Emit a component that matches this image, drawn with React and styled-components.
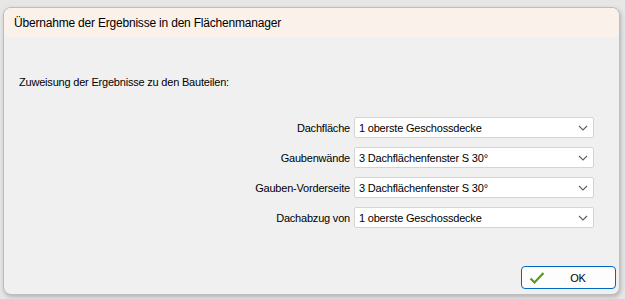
import React from "react";
import styled, { createGlobalStyle } from "styled-components";

const GlobalStyle = createGlobalStyle`
  html, body {
    margin: 0;
    padding: 0;
    background: #e6e6e6;
  }
  body {
    font-family: "Liberation Sans", Arial, sans-serif;
    font-size: 11px;
    letter-spacing: -0.2px;
    color: #000;
  }
`;

const Screen = styled.div`
  width: 625px;
  height: 299px;
  padding: 7px 5px 4px 3px;
  box-sizing: border-box;
  overflow: hidden;
`;

const Window = styled.div`
  height: 288px;
  display: flex;
  flex-direction: column;
  background: #f0f0f0;
  border: 1px solid #bdbdbd;
  border-radius: 8px;
  box-shadow: 1px 2px 4px rgba(0, 0, 0, 0.22);
  overflow: hidden;
  box-sizing: border-box;
`;

const TitleBar = styled.div`
  height: 29px;
  flex: none;
  display: flex;
  align-items: center;
  padding-left: 10px;
  background: #fbf1eb;
  font-size: 12px;
`;

const Body = styled.div`
  flex: 1;
  display: flex;
  flex-direction: column;
  padding: 37px 25px 0 15px;
`;

const Intro = styled.div`
  line-height: 16px;
  margin-bottom: 27px;
`;

const Form = styled.div`
  align-self: flex-end;
  display: grid;
  grid-template-columns: auto 240px;
  column-gap: 4px;
  row-gap: 9px;
  align-items: center;
`;

const Label = styled.div`
  text-align: right;
  white-space: nowrap;
`;

const Select = styled.div`
  height: 21px;
  box-sizing: border-box;
  display: flex;
  align-items: center;
  justify-content: space-between;
  padding: 0 5px 0 4px;
  background: #fff;
  border: 1px solid #d4d4d4;
  border-radius: 2px;
`;

const Footer = styled.div`
  flex: none;
  display: flex;
  justify-content: flex-end;
  padding: 0 3px 5px 0;
`;

const Button = styled.button`
  width: 95px;
  height: 23px;
  display: flex;
  align-items: center;
  padding: 0 0 0 7px;
  background: #fdfdfd;
  border: 1px solid #0067c0;
  border-radius: 4px;
  font: inherit;
  letter-spacing: inherit;
  color: #000;
  cursor: pointer;
`;

const ButtonText = styled.span`
  flex: 1;
  text-align: center;
  padding-right: 4px;
`;

const Chevron = () => (
  <svg width="10" height="6" viewBox="0 0 10 6">
    <path d="M1 1 L5 5 L9 1" fill="none" stroke="#606060" strokeWidth="1.1" />
  </svg>
);

const Check = () => (
  <svg width="16" height="14" viewBox="0 0 16 14">
    <path d="M1.5 7.5 L5.5 11.5 L14.5 2" fill="none" stroke="#5b9a18" strokeWidth="2.2" />
  </svg>
);

const rows = [
  ["Dachfläche", "1 oberste Geschossdecke"],
  ["Gaubenwände", "3 Dachflächenfenster S 30°"],
  ["Gauben-Vorderseite", "3 Dachflächenfenster S 30°"],
  ["Dachabzug von", "1 oberste Geschossdecke"],
];

export default function App() {
  return (
    <Screen>
      <GlobalStyle />
      <Window>
        <TitleBar>Übernahme der Ergebnisse in den Flächenmanager</TitleBar>
        <Body>
          <Intro>Zuweisung der Ergebnisse zu den Bauteilen:</Intro>
          <Form>
            {rows.map(([label, value]) => (
              <React.Fragment key={label}>
                <Label>{label}</Label>
                <Select>
                  <span>{value}</span>
                  <Chevron />
                </Select>
              </React.Fragment>
            ))}
          </Form>
        </Body>
        <Footer>
          <Button>
            <Check />
            <ButtonText>OK</ButtonText>
          </Button>
        </Footer>
      </Window>
    </Screen>
  );
}
